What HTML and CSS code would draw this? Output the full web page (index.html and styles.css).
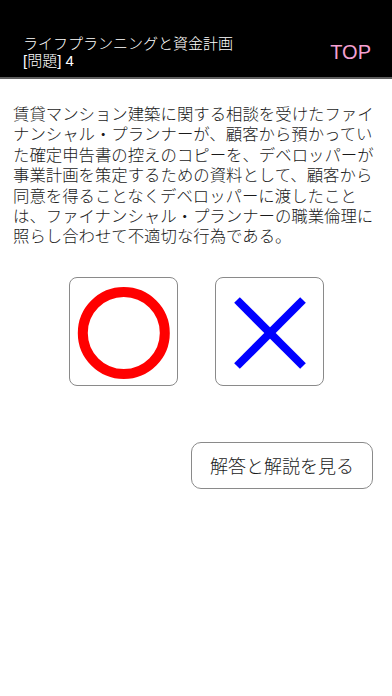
FILE: index.html
```html
<!DOCTYPE html>
<html lang="ja">
<head>
<meta charset="utf-8">
<title>ライフプランニングと資金計画</title>
<link rel="stylesheet" href="styles.css">
</head>
<body>
<header class="topbar">
  <div class="title">
    <div class="title-line">ライフプランニングと資金計画</div>
    <div class="title-line"><span class="latin">[</span>問題<span class="latin">] 4</span></div>
  </div>
  <div class="top-link">TOP</div>
</header>
<main class="content">
  <p class="question">賃貸マンション建築に関する相談を受けたファイナンシャル・プランナーが、顧客から預かっていた確定申告書の控えのコピーを、デベロッパーが事業計画を策定するための資料として、顧客から同意を得ることなくデベロッパーに渡したことは、ファイナンシャル・プランナーの職業倫理に照らし合わせて不適切な行為である。</p>
  <div class="choices">
    <div class="choice">
      <svg class="mark" viewBox="0 0 107 107" width="107" height="107">
        <circle cx="53.8" cy="55" r="41" fill="none" stroke="#ff0000" stroke-width="10"/>
      </svg>
    </div>
    <div class="choice">
      <svg class="mark" viewBox="0 0 107 107" width="107" height="107">
        <line x1="21" y1="22" x2="87" y2="88" stroke="#0000ff" stroke-width="8"/>
        <line x1="87" y1="22" x2="21" y2="88" stroke="#0000ff" stroke-width="8"/>
      </svg>
    </div>
  </div>
  <div class="answer-row">
    <div class="answer-btn">解答と解説を見る</div>
  </div>
</main>
</body>
</html>
```

FILE: styles.css
```css
html, body {
  margin: 0;
  padding: 0;
  background: #ffffff;
}

body {
  font-family: "Liberation Sans", "Noto Sans CJK JP", sans-serif;
  font-weight: 300;
  color: #1a1a1a;
}

.topbar {
  box-sizing: border-box;
  height: 79px;
  background: #000000;
  border-bottom: 2px solid #5e5e5e;
  padding: 26px 21px 0 23px;
  display: flex;
  align-items: center;
  justify-content: space-between;
}

.title {
  color: #ffffff;
  font-size: 15px;
  line-height: 17px;
}

.latin {
  font-weight: 400;
}

.top-link {
  color: #f5a0d2;
  font-size: 20px;
  line-height: 22px;
  font-weight: 400;
}

.content {
  padding: 25px 13px 0 13px;
}

.question {
  margin: 0;
  font-size: 16.4px;
  line-height: 20.4px;
  color: #1a1a1a;
}

.choices {
  margin-top: 30px;
  display: flex;
  justify-content: center;
  gap: 37px;
}

.choice {
  box-sizing: border-box;
  width: 109px;
  height: 109px;
  border: 1px solid #8a8a8a;
  border-radius: 8px;
  background: #ffffff;
}

.mark {
  display: block;
}

.answer-row {
  margin-top: 56px;
  display: flex;
  justify-content: flex-end;
  padding-right: 6px;
}

.answer-btn {
  box-sizing: border-box;
  width: 182px;
  height: 47px;
  border: 1px solid #8a8a8a;
  border-radius: 10px;
  display: flex;
  align-items: center;
  justify-content: center;
  font-size: 18px;
  color: #1a1a1a;
}
```
